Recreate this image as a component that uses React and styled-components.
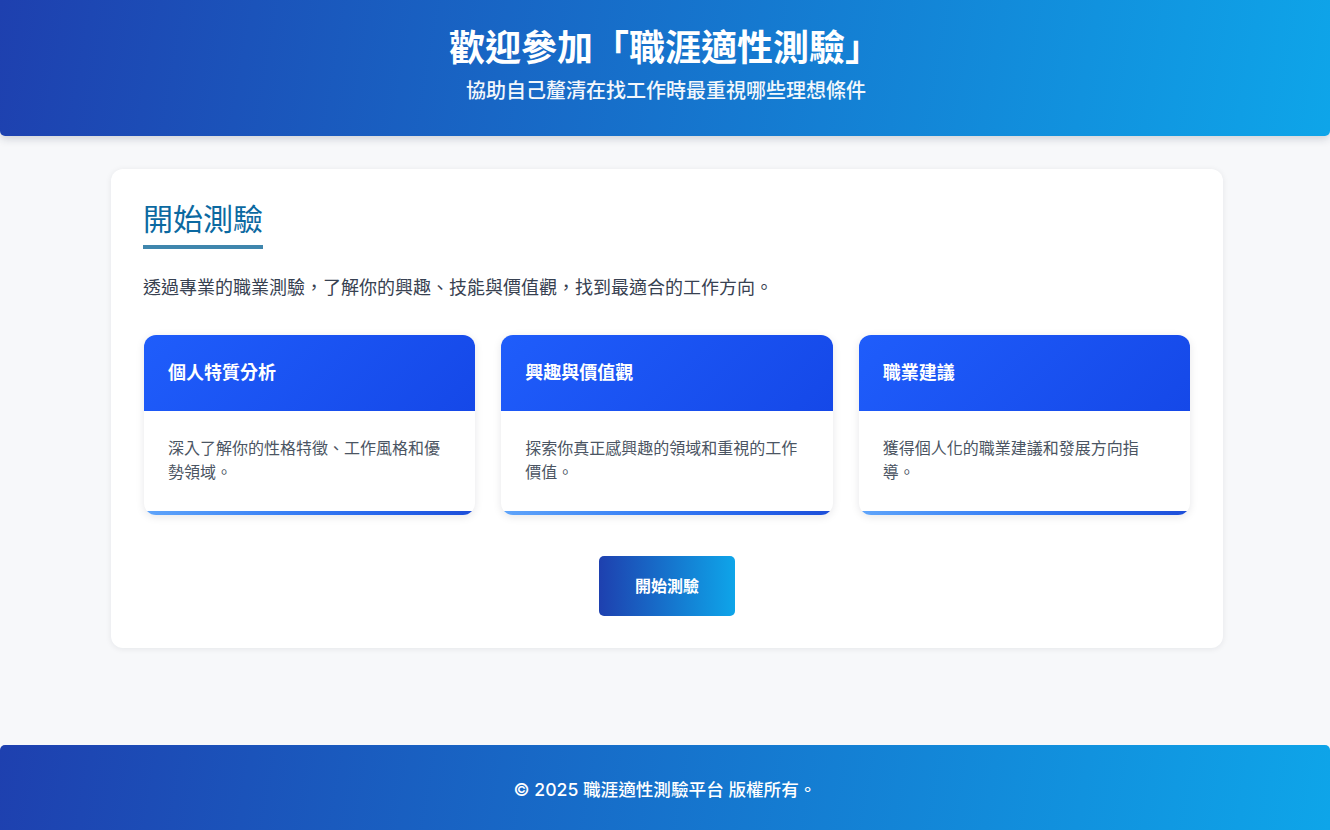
import React from 'react'
import styled, { createGlobalStyle } from 'styled-components'

const GlobalStyle = createGlobalStyle`
  * {
    margin: 0;
    padding: 0;
    box-sizing: border-box;
  }
  body {
    background: #f7f8fa;
    font-family: "Inter", "Noto Sans CJK TC", sans-serif;
    color: #374151;
  }
`

const features = [
  { title: '個人特質分析', text: '深入了解你的性格特徵、工作風格和優勢領域。' },
  { title: '興趣與價值觀', text: '探索你真正感興趣的領域和重視的工作價值。' },
  { title: '職業建議', text: '獲得個人化的職業建議和發展方向指導。' },
]

const App = () => {
  return (
    <Page>
      <GlobalStyle />
      <Header>
        <Title>歡迎參加「職涯適性測驗」</Title>
        <Subtitle>協助自己釐清在找工作時最重視哪些理想條件</Subtitle>
      </Header>
      <Main>
        <Panel>
          <Heading>開始測驗</Heading>
          <Intro>透過專業的職業測驗，了解你的興趣、技能與價值觀，找到最適合的工作方向。</Intro>
          <Grid>
            {features.map((f) => (
              <Feature key={f.title}>
                <FeatureHead>{f.title}</FeatureHead>
                <FeatureBody>{f.text}</FeatureBody>
              </Feature>
            ))}
          </Grid>
          <Actions>
            <StartButton>開始測驗</StartButton>
          </Actions>
        </Panel>
      </Main>
      <Footer>© 2025 職涯適性測驗平台 版權所有。</Footer>
    </Page>
  )
}

export default App

const Page = styled.div`
  min-height: 100vh;
  display: flex;
  flex-direction: column;
`

const Header = styled.header`
  background: linear-gradient(100deg, #1e40af 0%, #0ea5e9 100%);
  color: #fff;
  text-align: center;
  padding: 26px 0 30px;
  border-radius: 0 0 5px 5px;
  box-shadow: 0 3px 8px rgba(30, 41, 59, 0.18);
`

const Title = styled.h1`
  font-size: 36px;
  font-weight: 700;
  line-height: 44px;
`

const Subtitle = styled.p`
  font-size: 20px;
  font-weight: 500;
  line-height: 30px;
  margin-top: 6px;
  padding-left: 2px;
  opacity: 0.95;
`

const Main = styled.main`
  flex: 1;
  padding: 33px 0 96px;
`

const Panel = styled.section`
  width: 1112px;
  margin: 0 auto;
  transform: translateX(2px);
  background: #fff;
  border-radius: 12px;
  box-shadow: 0 1px 6px rgba(15, 23, 42, 0.08);
  padding: 30px 32px 32px;
`

const Heading = styled.h2`
  display: inline-block;
  font-size: 30px;
  font-weight: 400;
  line-height: 40px;
  color: #0b69a1;
  padding-bottom: 6px;
  border-bottom: 4px solid #3f86ad;
`

const Intro = styled.p`
  font-size: 18px;
  line-height: 28px;
  color: #374151;
  margin-top: 25px;
`

const Grid = styled.div`
  display: grid;
  grid-template-columns: repeat(3, 1fr);
  gap: 26px;
  margin-top: 33px;
  padding: 0 1px;
`

const Feature = styled.div`
  position: relative;
  background: #fff;
  border-radius: 12px;
  overflow: hidden;
  box-shadow: 0 2px 8px rgba(15, 23, 42, 0.1);

  /* accent stripe along the bottom edge */
  &::after {
    content: '';
    position: absolute;
    left: 0;
    right: 0;
    bottom: 0;
    height: 4px;
    background: linear-gradient(90deg, #60a5fa 0%, #3b82f6 40%, #2563eb 75%, #1d4ed8 100%);
  }
`

const FeatureHead = styled.h3`
  background: linear-gradient(135deg, #1f5dfb 0%, #1548e8 100%);
  color: #fff;
  font-size: 18px;
  font-weight: 700;
  line-height: 28px;
  padding: 24px;
`

const FeatureBody = styled.p`
  font-size: 16px;
  line-height: 24px;
  color: #4b5563;
  padding: 25px 24px 31px;
`

const Actions = styled.div`
  display: flex;
  justify-content: center;
  margin-top: 41px;
`

const StartButton = styled.button`
  border: none;
  border-radius: 5px;
  background: linear-gradient(90deg, #1e40af 0%, #0ea5e9 100%);
  color: #fff;
  font-family: inherit;
  font-size: 16px;
  font-weight: 700;
  line-height: 24px;
  padding: 18px 36px;
  cursor: pointer;
`

const Footer = styled.footer`
  background: linear-gradient(100deg, #1e40af 0%, #0ea5e9 100%);
  color: #fff;
  text-align: center;
  font-size: 17.6px;
  font-weight: 500;
  line-height: 26px;
  padding: 32px 0 27px;
  border-radius: 5px 5px 0 0;
`
